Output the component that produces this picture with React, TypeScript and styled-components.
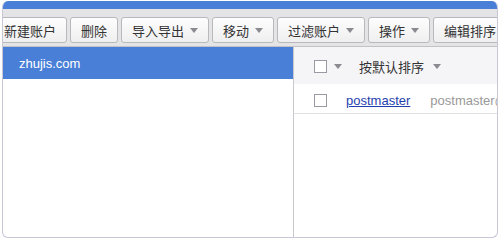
import React from "react";
import styled, { createGlobalStyle } from "styled-components";

const Global = createGlobalStyle`
  html, body { margin: 0; padding: 0; background: #ffffff; }
  body { font-family: "Liberation Sans", "Noto Sans CJK SC", sans-serif; font-size: 13px; color: #333; }
`;

const Frame = styled.div`
  margin: 1px 0 0 2px;
  width: 496px;
  height: 237px;
  box-sizing: border-box;
  border: 1px solid #c9c6d6;
  border-top: none;
  border-radius: 6px;
  overflow: hidden;
  display: flex;
  flex-direction: column;
  background: #fff;
`;

const TopBar = styled.div`
  height: 8px;
  background: #4a7fd8;
  flex: none;
  margin: 0 -1px;
`;

const Toolbar = styled.div`
  flex: none;
  height: 38px;
  box-sizing: border-box;
  background: #e4e4e7;
  border-bottom: 1px solid #c2c2c6;
  display: flex;
  align-items: flex-start;
  gap: 3px;
  padding: 8px 0 0 0;
  margin-left: -10px;
  white-space: nowrap;
`;

const Button = styled.div`
  flex: none;
  height: 26px;
  box-sizing: border-box;
  border: 1px solid #b9b9bd;
  border-radius: 3px;
  background: linear-gradient(#fdfdfd, #efeff1);
  padding: 0 10px;
  display: flex;
  align-items: center;
  gap: 6px;
  font-family: "Noto Sans CJK SC", sans-serif;
  font-size: 13px;
  color: #333;
`;

const Caret = styled.span`
  width: 0;
  height: 0;
  border-left: 4.5px solid transparent;
  border-right: 4.5px solid transparent;
  border-top: 5px solid #8a8a90;
  display: inline-block;
`;

const Body = styled.div`
  flex: 1;
  display: flex;
  min-height: 0;
`;

const Sidebar = styled.div`
  width: 290px;
  flex: none;
  border-right: 1px solid #c9c9cd;
`;

const DomainRow = styled.div<{ $active?: boolean }>`
  height: 32px;
  display: flex;
  align-items: center;
  padding-left: 16px;
  background: ${(p) => (p.$active ? "#4a7fd8" : "transparent")};
  color: ${(p) => (p.$active ? "#ffffff" : "#333")};
  font-family: "Liberation Sans", sans-serif;
  font-size: 13px;
`;

const Main = styled.div`
  flex: 1;
  min-width: 0;
  overflow: hidden;
`;

const HeaderRow = styled.div`
  height: 37px;
  box-sizing: border-box;
  padding-top: 2px;
  background: #f5f5f7;
  display: flex;
  align-items: center;
  padding-left: 20px;
  white-space: nowrap;
`;

const Row = styled.div`
  height: 30px;
  box-sizing: border-box;
  padding-top: 3px;
  border-bottom: 1px solid #e2e2e6;
  display: flex;
  align-items: center;
  padding-left: 20px;
  white-space: nowrap;
  overflow: hidden;
`;

const Check = styled.span`
  width: 13px;
  height: 13px;
  box-sizing: border-box;
  border: 1px solid #9a9aa4;
  background: #fff;
  flex: none;
`;

const HeadCaret = styled(Caret)<{ $ml: number }>`
  margin-left: ${(p) => p.$ml}px;
`;

const SortLabel = styled.span`
  margin-left: 17px;
  font-family: "Noto Sans CJK SC", sans-serif;
  font-size: 13px;
  color: #333;
`;

const UserLink = styled.a`
  margin-left: 19px;
  color: #1f3fae;
  text-decoration: underline;
  font-family: "Liberation Sans", sans-serif;
  font-size: 13px;
`;

const Email = styled.span`
  margin-left: 20px;
  color: #999;
  font-family: "Liberation Sans", sans-serif;
  font-size: 13px;
`;

const buttons: { label: string; menu?: boolean }[] = [
  { label: "新建账户" },
  { label: "删除" },
  { label: "导入导出", menu: true },
  { label: "移动", menu: true },
  { label: "过滤账户", menu: true },
  { label: "操作", menu: true },
  { label: "编辑排序" },
];

export default function App() {
  return (
    <>
      <Global />
      <Frame>
        <TopBar />
        <Toolbar>
          {buttons.map((b) => (
            <Button key={b.label}>
              {b.label}
              {b.menu && <Caret />}
            </Button>
          ))}
        </Toolbar>
        <Body>
          <Sidebar>
            <DomainRow $active>zhujis.com</DomainRow>
          </Sidebar>
          <Main>
            <HeaderRow>
              <Check />
              <HeadCaret $ml={7} />
              <SortLabel>按默认排序</SortLabel>
              <HeadCaret $ml={9} />
            </HeaderRow>
            <Row>
              <Check />
              <UserLink href="#">postmaster</UserLink>
              <Email>postmaster@zhujis.com</Email>
            </Row>
          </Main>
        </Body>
      </Frame>
    </>
  );
}
